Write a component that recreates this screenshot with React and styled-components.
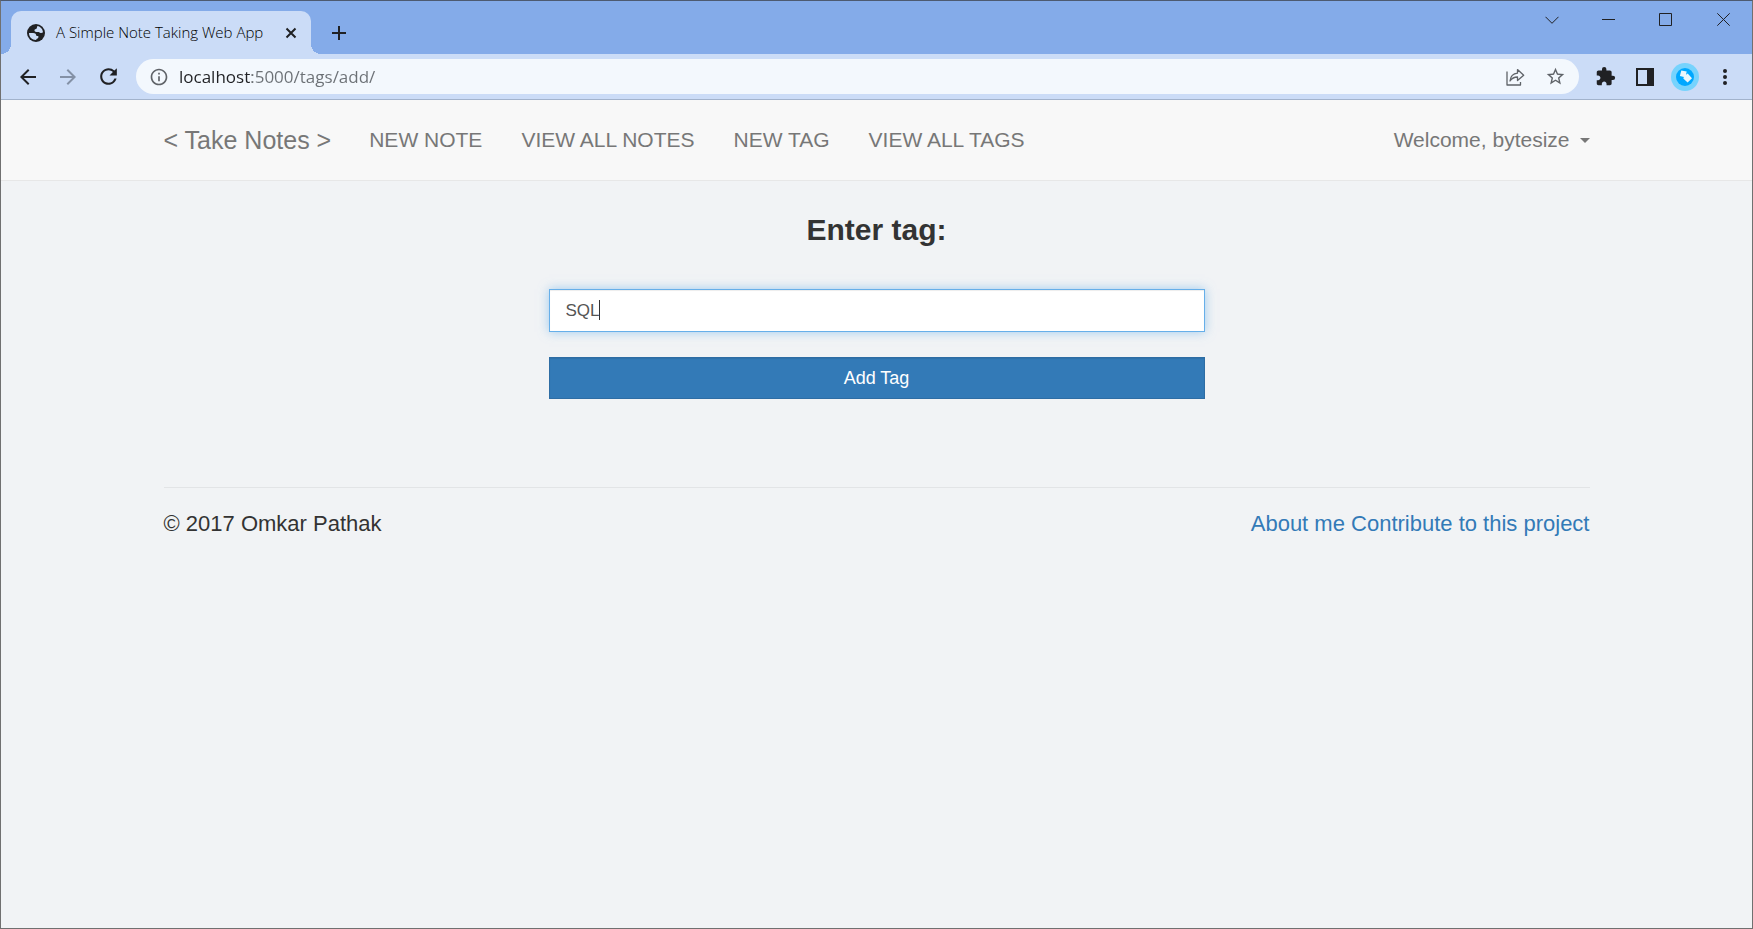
import React, { useState } from "react";
import styled, { createGlobalStyle } from "styled-components";
import { MdArrowBack, MdArrowForward, MdRefresh, MdInfoOutline, MdStarBorder, MdExtension } from "react-icons/md";

const GlobalStyle = createGlobalStyle`
  *, *::before, *::after { box-sizing: border-box; }
  body { margin: 0; background: #f1f3f5; color: #333; font-family: "Liberation Sans", Arial, sans-serif; }
  button, input { font-family: inherit; margin: 0; }
  a { text-decoration: none; }
`;

const uiFont = `"Open Sans", "Segoe UI", sans-serif`;

const Window = styled.div`
  min-height: 100vh;
  border: 1px solid #707070;
  border-top-color: #4d5a70;
`;

const TitleBar = styled.div`
  display: flex;
  height: 53px;
  padding-left: 10px;
  background: #84abe9;
`;

const Tab = styled.div`
  position: relative;
  display: flex;
  align-items: center;
  width: 300px;
  height: 43px;
  margin-top: 10px;
  padding: 0 10px 0 16px;
  border-radius: 10px 10px 0 0;
  background: #cbdcf7;
  color: #202124;
  &::before, &::after {
    content: "";
    position: absolute;
    bottom: 0;
    width: 10px;
    height: 10px;
  }
  &::before { right: 100%; background: radial-gradient(circle at 0 0, transparent 10px, #cbdcf7 10px); }
  &::after { left: 100%; background: radial-gradient(circle at 100% 0, transparent 10px, #cbdcf7 10px); }
`;

const TabTitle = styled.span`
  flex: 1;
  margin-left: 11px;
  padding-bottom: 1px;
  color: #000;
  font: 300 15px/20px ${uiFont};
  white-space: nowrap;
`;

const IconButton = styled.button`
  display: flex;
  align-items: center;
  justify-content: center;
  flex: none;
  width: ${(p) => p.$w || 40}px;
  height: ${(p) => p.$h || 32}px;
  padding: 0;
  border: 0;
  background: none;
  color: ${(p) => p.$color || "#202124"};
`;

const NewTabSlot = styled.div`
  display: flex;
  align-items: center;
  padding: 10px 0 0 8px;
`;

const WindowControls = styled.div`
  display: flex;
  margin-left: auto;
`;

const Toolbar = styled.div`
  display: flex;
  align-items: center;
  height: 46px;
  padding: 0 7px;
  background: #cbdcf7;
  border-bottom: 1px solid #a2b3cc;
`;

const AddressBar = styled.div`
  display: flex;
  align-items: center;
  flex: 1;
  height: 35px;
  margin: 0 6px 0 8px;
  padding: 0 4px 0 3px;
  border-radius: 18px;
  background: #f3f8fd;
`;

const AddressInput = styled.input`
  flex: 1;
  min-width: 0;
  height: 28px;
  padding: 0;
  border: 0;
  outline: 0;
  font: 400 17px/28px ${uiFont};
  color: transparent;
  background: linear-gradient(90deg, #202124 73px, #6b7075 73px);
  background-clip: text;
  -webkit-background-clip: text;
`;

const Container = styled.div`
  width: 100%;
  max-width: 1464px;
  margin: 0 auto;
  padding: 0 19px;
`;

const Navbar = styled.nav`
  background: #f8f8f8;
  border-bottom: 1px solid #e7e7e7;
`;

const NavRow = styled(Container)`
  display: flex;
  align-items: center;
  gap: 1px;
  height: 80px;
`;

const Brand = styled.a`
  margin-right: 18px;
  color: #777;
  font-size: 25px;
  line-height: 30px;
`;

const NavLink = styled.a`
  padding: 0 19px;
  color: #777;
  font-size: 21px;
  line-height: 30px;
`;

const UserMenu = styled.button`
  display: flex;
  align-items: center;
  gap: 10px;
  margin-left: auto;
  padding: 0;
  border: 0;
  background: none;
  color: #777;
  font-size: 21px;
  line-height: 30px;
`;

const Caret = styled.span`
  border: 5px solid transparent;
  border-top-color: currentColor;
  border-bottom: 0;
`;

const Form = styled.form`
  display: flex;
  flex-direction: column;
  max-width: 656px;
  margin: 0 auto;
  padding: 31px 0 88px;
`;

const Heading = styled.label`
  margin-bottom: 41px;
  text-align: center;
  font-size: 30px;
  font-weight: 700;
  line-height: 36px;
`;

const Field = styled.div`
  position: relative;
  margin-bottom: 25px;
`;

const TextInput = styled.input`
  display: block;
  width: 100%;
  height: 43px;
  padding: 0 16px;
  border: 1px solid #66afe9;
  border-radius: 0;
  outline: 0;
  background: #fff;
  color: #555;
  caret-color: transparent;
  font-size: 17px;
  box-shadow: inset 0 1px 1px rgba(0, 0, 0, 0.075), 0 0 10px rgba(102, 175, 233, 0.6);
`;

const TextCursor = styled.span`
  position: absolute;
  left: 50px;
  top: 11px;
  width: 1px;
  height: 20px;
  background: #333;
`;

const SubmitButton = styled.button`
  height: 42px;
  padding: 0;
  border: 1px solid #2e6da4;
  background: #337ab7;
  box-shadow: inset 0 1px 1px rgba(0, 0, 0, 0.075);
  color: #fff;
  font-size: 18px;
`;

const Footer = styled.footer`
  display: flex;
  justify-content: space-between;
  padding-top: 21px;
  border-top: 1px solid #e2e4e6;
  font-size: 22px;
  line-height: 30px;
`;

const FooterLink = styled.a`
  color: #337ab7;
`;

const Stroke = ({ w, h = w, d, sw = 1 }) => (
  <svg width={w} height={h} viewBox={`0 0 ${w} ${h}`} fill="none" stroke="currentColor" strokeWidth={sw} aria-hidden="true">
    <path d={d} />
  </svg>
);

const GlobeIcon = () => (
  <svg width="18" height="18" viewBox="0 0 18 18" aria-hidden="true">
    <circle cx="9" cy="9" r="9" fill="#202124" />
    <path fill="#cbdcf7" d="M10.500 2c3 .6 5.300 3.200 5.500 6.300-.8.800-2 1-3 .5-.7-.4-1-.9-1.800-.9H9.300C8 7.900 7.200 7 7.500 6c.3-.9 1.200-.8 1.900-1.200.8-.4.300-1.800 1.100-2.800z" />
    <path fill="#cbdcf7" d="M2 9h4.200c1.700 0 2.800.9 3 2.200.2.900.9.800 1.600.9.900.2.900 1.200.3 1.800-.7.700-1.800.6-2 2.100C5.200 16.100 1.900 13 2 9z" />
  </svg>
);

const ShareIcon = () => (
  <svg width="20" height="20" viewBox="0 0 20 20" fill="none" stroke="currentColor" strokeWidth="1.3" strokeLinejoin="round" aria-hidden="true">
    <path d="M2 4.500V18h13.500v-3" />
    <path d="M5 14c.5-4.700 3-7.400 7.500-7.800V2.600l6.200 5.600-6.200 5.400V10C9 10 7 11 5 14z" />
  </svg>
);

const SidePanelIcon = () => (
  <svg width="18" height="18" viewBox="0 0 18 18" aria-hidden="true">
    <path fill="currentColor" fillRule="evenodd" d="M0 0h18v18H0zM2 2v14h9V2z" />
  </svg>
);

const ProfileIcon = () => (
  <svg width="28" height="28" viewBox="0 0 28 28" aria-hidden="true">
    <circle cx="14" cy="14" r="14" fill="#76d3fd" />
    <circle cx="14" cy="14" r="9" fill="#00a8ff" />
    <path fill="#edf7fb" d="M10.300 7.500l5.400 1-.7 3.300 1.700-1.200 4.300 4.600-4.400 4.300-4.300-3.900.6-1.700-4-1z" />
  </svg>
);

const MenuIcon = () => (
  <svg width="4" height="18" viewBox="0 0 4 18" fill="currentColor" aria-hidden="true">
    <circle cx="2" cy="3" r="2" /><circle cx="2" cy="9" r="2" /><circle cx="2" cy="15" r="2" />
  </svg>
);

const links = ["New Note", "View All Notes", "New Tag", "View All Tags"];

export default function App() {
  const [tag, setTag] = useState("SQL");
  return (
    <Window>
      <GlobalStyle />
      <TitleBar>
        <Tab>
          <GlobeIcon />
          <TabTitle>A Simple Note Taking Web App</TabTitle>
          <IconButton $w={20} $h={20} aria-label="Close tab">
            <Stroke w={12} d="M1.500 1.500l9 9m0-9l-9 9" sw={2} />
          </IconButton>
        </Tab>
        <NewTabSlot>
          <IconButton aria-label="New tab"><Stroke w={16} d="M8 1v14M1 8h14" sw={2} /></IconButton>
        </NewTabSlot>
        <WindowControls>
          <IconButton $w={56} $h={37} aria-label="Search tabs"><Stroke w={14} h={8} d="M.5.8L7 7.300 13.500.8" /></IconButton>
          <IconButton $w={57} $h={37} aria-label="Minimize"><Stroke w={13} h={1} d="M0 .5h13" /></IconButton>
          <IconButton $w={57} $h={37} aria-label="Maximize"><Stroke w={13} d="M.5.5h12v12H.5z" /></IconButton>
          <IconButton $w={58} $h={37} aria-label="Close"><Stroke w={13} d="M.3.3l12.400 12.400m0-12.400L.3 12.700" /></IconButton>
        </WindowControls>
      </TitleBar>
      <Toolbar>
        <IconButton aria-label="Back"><MdArrowBack size={24} /></IconButton>
        <IconButton $color="#8491a6" aria-label="Forward"><MdArrowForward size={24} /></IconButton>
        <IconButton aria-label="Reload"><MdRefresh size={25} /></IconButton>
        <AddressBar>
          <IconButton $color="#5f6368" aria-label="Site information"><MdInfoOutline size={20} /></IconButton>
          <AddressInput aria-label="Address" defaultValue="localhost:5000/tags/add/" />
          <IconButton $color="#5f6368" aria-label="Share"><ShareIcon /></IconButton>
          <IconButton $color="#5f6368" aria-label="Bookmark"><MdStarBorder size={21} /></IconButton>
        </AddressBar>
        <IconButton aria-label="Extensions"><MdExtension size={21} /></IconButton>
        <IconButton aria-label="Side panel"><SidePanelIcon /></IconButton>
        <IconButton aria-label="Profile"><ProfileIcon /></IconButton>
        <IconButton aria-label="Menu"><MenuIcon /></IconButton>
      </Toolbar>
      <Navbar>
        <NavRow>
          <Brand href="#home">&lt; Take Notes &gt;</Brand>
          {links.map((text) => (
            <NavLink key={text} href="#nav">{text.toUpperCase()}</NavLink>
          ))}
          <UserMenu>Welcome, bytesize<Caret /></UserMenu>
        </NavRow>
      </Navbar>
      <Container>
        <Form onSubmit={(e) => e.preventDefault()}>
          <Heading htmlFor="tag">Enter tag:</Heading>
          <Field>
            <TextInput id="tag" value={tag} onChange={(e) => setTag(e.target.value)} />
            {tag === "SQL" && <TextCursor />}
          </Field>
          <SubmitButton type="submit">Add Tag</SubmitButton>
        </Form>
        <Footer>
          <span>© 2017 Omkar Pathak</span>
          <span>
            <FooterLink href="#about">About me</FooterLink>{" "}
            <FooterLink href="#contribute">Contribute to this project</FooterLink>
          </span>
        </Footer>
      </Container>
    </Window>
  );
}
